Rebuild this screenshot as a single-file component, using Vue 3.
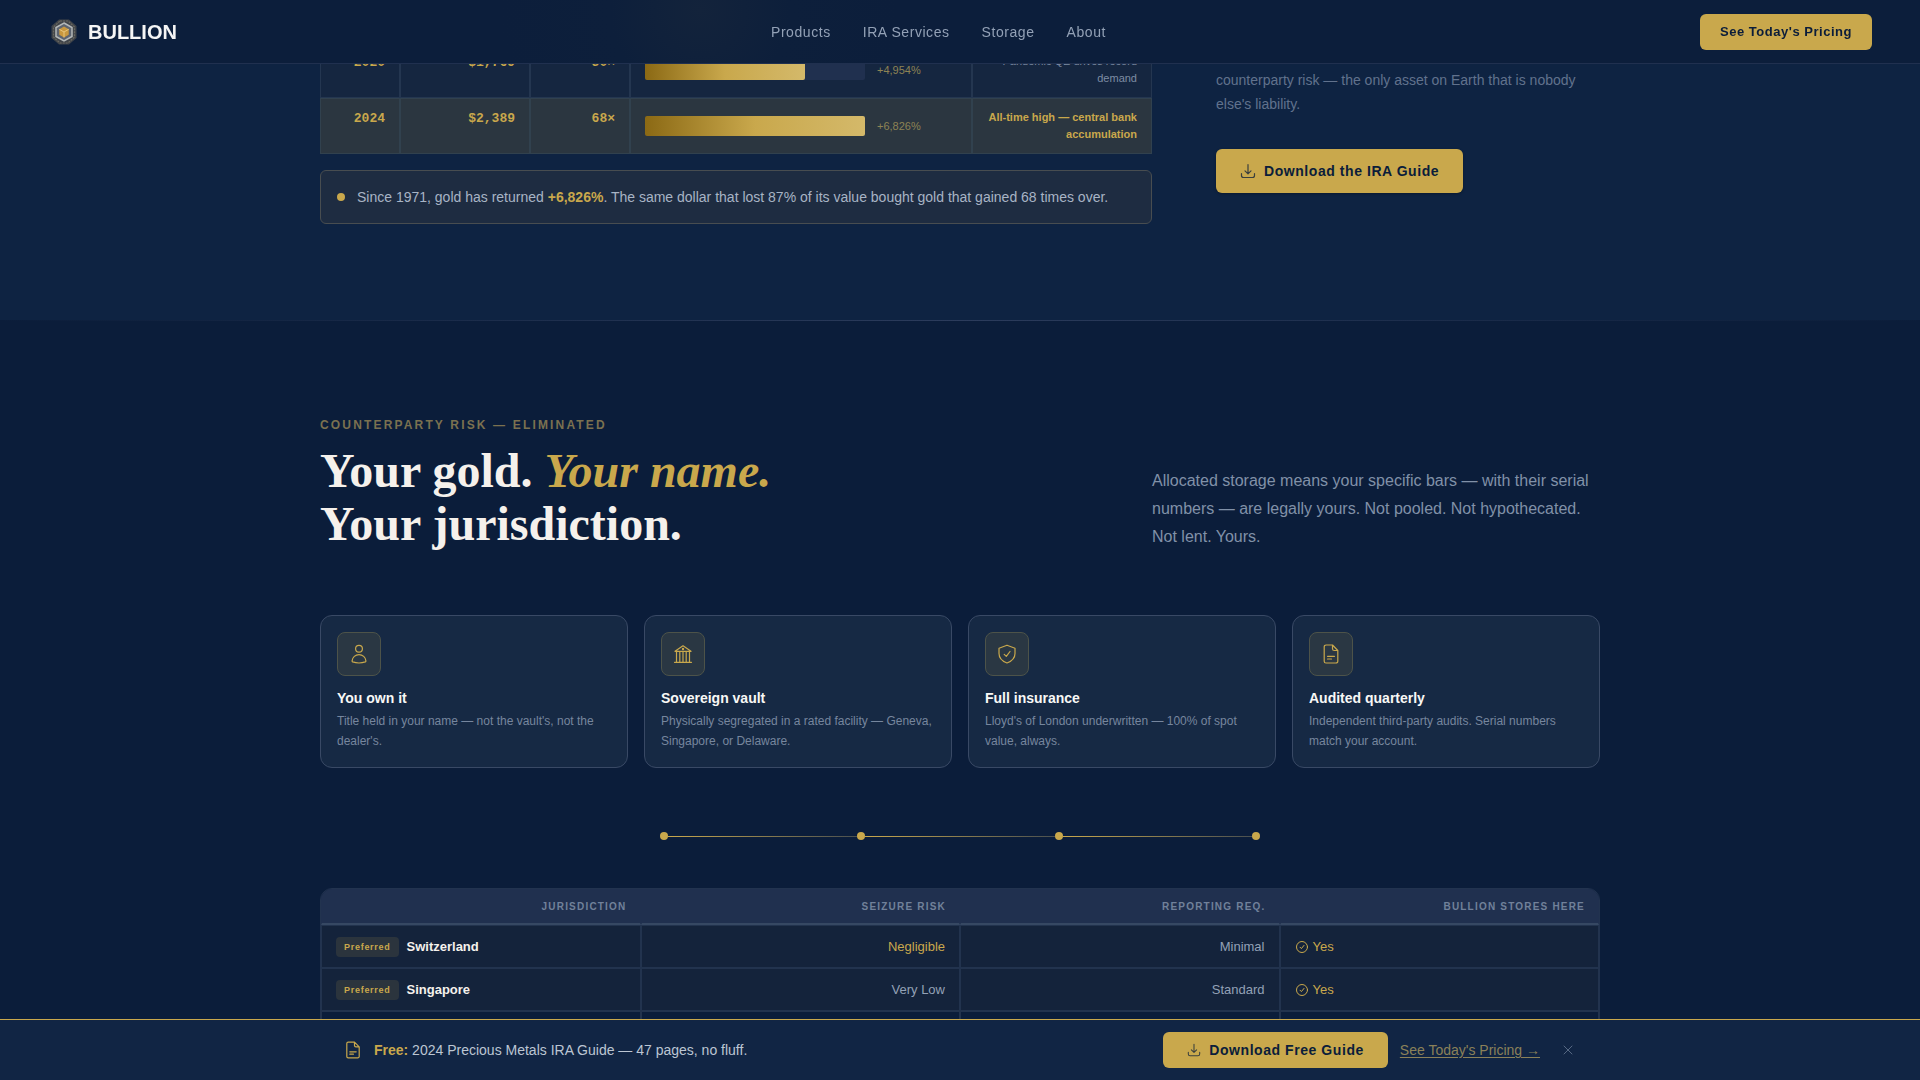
<script setup>
const links = ['Products', 'IRA Services', 'Storage', 'About']

const history = [
  { year: '2020', price: '$1,769', multiple: '50×', gain: 4954, label: '+4,954%', note: 'Pandemic QE drives record demand', peak: false },
  { year: '2024', price: '$2,389', multiple: '68×', gain: 6826, label: '+6,826%', note: 'All-time high — central bank accumulation', peak: true },
]
const maxGain = 6826

const pillars = [
  { icon: 'person', title: 'You own it', text: "Title held in your name — not the vault's, not the dealer's." },
  { icon: 'vault', title: 'Sovereign vault', text: 'Physically segregated in a rated facility — Geneva, Singapore, or Delaware.' },
  { icon: 'shield', title: 'Full insurance', text: "Lloyd's of London underwritten — 100% of spot value, always." },
  { icon: 'document', title: 'Audited quarterly', text: 'Independent third-party audits. Serial numbers match your account.' },
]

const jurisdictions = [
  { name: 'Switzerland', risk: 'Negligible', low: true, reporting: 'Minimal' },
  { name: 'Singapore', risk: 'Very Low', low: false, reporting: 'Standard' },
]
</script>

<template>
  <div class="page">
    <header class="topbar">
      <a class="brand" href="#">
        <svg width="32" height="32" viewBox="0 0 32 32" aria-hidden="true">
          <path d="M11 3.5h10l7.5 6.5v12L21 28.500H11L3.500 22V10z" fill="#40444a" />
          <path d="M12 5h8l6.500 6v10L20 27h-8l-6.500-6V11z" fill="none" stroke="#6a6960" stroke-width="1.200" stroke-dasharray="2 1" />
          <path d="M16 7l8 4.500v9L16 25l-8-4.500v-9z" fill="#5d6470" stroke="#b4b8b8" stroke-width="1.500" />
          <path d="M16 10.500l4.750 2.750v5.500L16 21.500l-4.750-2.750v-5.500z" fill="#c9983f" />
          <path d="M11.250 13.250L16 16l4.750-2.750M16 16v5.500" fill="none" stroke="#e8c67c" stroke-width="1" />
        </svg>
        <span>BULLION</span>
      </a>
      <nav class="nav" aria-label="Main">
        <a v-for="l in links" :key="l" href="#">{{ l }}</a>
      </nav>
      <button class="btn btn-small" type="button">See Today's Pricing</button>
    </header>

    <main>
      <section class="history">
        <div class="container history-grid">
          <div>
            <table class="gold-table">
              <colgroup>
                <col class="c-year" /><col class="c-price" /><col class="c-mult" /><col /><col class="c-note" />
              </colgroup>
              <tbody>
                <tr v-for="r in history" :key="r.year" :class="{ peak: r.peak }">
                  <td class="num">{{ r.year }}</td>
                  <td class="num">{{ r.price }}</td>
                  <td class="num">{{ r.multiple }}</td>
                  <td class="bar-cell">
                    <div class="bar-row">
                      <div class="track"><div class="fill" :style="{ width: (r.gain / maxGain) * 100 + '%' }"></div></div>
                      <span>{{ r.label }}</span>
                    </div>
                  </td>
                  <td class="note">{{ r.note }}</td>
                </tr>
              </tbody>
            </table>
            <div class="callout">
              <i class="dot"></i>
              <p>Since 1971, gold has returned <strong>+6,826%</strong>. The same dollar that lost 87% of its value bought gold that gained 68 times over.</p>
            </div>
          </div>
          <aside class="aside">
            <p>counterparty risk — the only asset on Earth that is nobody else's liability.</p>
            <button class="btn btn-large" type="button">
              <svg width="16" height="16" viewBox="0 0 16 16" class="line-icon" aria-hidden="true">
                <path d="M8 1.500v9M5 7.800l3 3 3-3M1.500 10.500v2a2 2 0 0 0 2 2h9a2 2 0 0 0 2-2v-2" />
              </svg>
              Download the IRA Guide
            </button>
          </aside>
        </div>
      </section>

      <section class="storage">
        <div class="rule"></div>
        <div class="container">
          <div class="intro">
            <div>
              <p class="eyebrow">COUNTERPARTY RISK — ELIMINATED</p>
              <h2>Your gold. <em>Your name.</em><br />Your jurisdiction.</h2>
            </div>
            <p class="lead">Allocated storage means your specific bars — with their serial numbers — are legally yours. Not pooled. Not hypothecated. Not lent. Yours.</p>
          </div>

          <div class="cards">
            <article v-for="p in pillars" :key="p.title" class="card">
              <div class="icon-box">
                <svg width="20" height="20" viewBox="0 0 20 20" class="line-icon" aria-hidden="true">
                  <template v-if="p.icon === 'person'">
                    <circle cx="10" cy="4.800" r="3.400" />
                    <path d="M10 10.600c-3.600 0-6.600 2.600-6.900 6.300 0 .5.200.8.600 1 3.700 1.300 8.900 1.300 12.600 0 .4-.2.600-.5.600-1-.3-3.700-3.300-6.300-6.900-6.300z" />
                  </template>
                  <template v-else-if="p.icon === 'vault'">
                    <path d="M2 7.300L10 1.800l8 5.500zM1.500 18.300h17M3.500 7.500v10.600M6.800 7.500v10.600M10 7.500v10.600M13.200 7.500v10.600M16.500 7.500v10.600" />
                    <circle cx="10" cy="5" r="0.600" />
                  </template>
                  <template v-else-if="p.icon === 'shield'">
                    <path d="M10 1.200l8 3v5.300c0 4.600-3.200 7.700-8 9.500-4.800-1.800-8-4.900-8-9.500V4.200z" />
                    <path d="M7.200 10.300l2.100 2.100 3.700-4.900" />
                  </template>
                  <template v-else>
                    <path d="M11.500 1H5a1.800 1.800 0 0 0-1.800 1.800v14.400A1.800 1.800 0 0 0 5 19h10a1.800 1.800 0 0 0 1.800-1.800V6.500zM11.500 1v3.700a1.800 1.800 0 0 0 1.800 1.800h3.500M6.500 12.300h7M6.500 15h4" />
                  </template>
                </svg>
              </div>
              <h3>{{ p.title }}</h3>
              <p>{{ p.text }}</p>
            </article>
          </div>

          <div class="chain" aria-hidden="true">
            <template v-for="n in 4" :key="n">
              <i class="dot"></i>
              <i v-if="n < 4" class="link"></i>
            </template>
          </div>

          <div class="table-wrap">
            <table class="places">
              <thead>
                <tr>
                  <th scope="col">JURISDICTION</th>
                  <th scope="col">SEIZURE RISK</th>
                  <th scope="col">REPORTING REQ.</th>
                  <th scope="col">BULLION STORES HERE</th>
                </tr>
              </thead>
              <tbody>
                <tr v-for="j in jurisdictions" :key="j.name" class="preferred">
                  <td class="left">
                    <div class="cell-row name"><span class="badge">Preferred</span><strong>{{ j.name }}</strong></div>
                  </td>
                  <td :class="{ gold: j.low }">{{ j.risk }}</td>
                  <td>{{ j.reporting }}</td>
                  <td class="left">
                    <div class="cell-row yes">
                      <svg width="14" height="14" viewBox="0 0 14 14" class="line-icon" aria-hidden="true">
                        <circle cx="7" cy="7" r="5.500" />
                        <path d="M5 7.200l1.400 1.400L9 5.400" />
                      </svg>
                      Yes
                    </div>
                  </td>
                </tr>
                <tr><td>&nbsp;</td><td></td><td></td><td></td></tr>
              </tbody>
            </table>
          </div>
        </div>
      </section>
    </main>

    <div class="offer">
      <div class="container offer-row">
        <div class="offer-text">
          <svg width="18" height="18" viewBox="0 0 18 18" class="line-icon" aria-hidden="true">
            <path d="M10.500 1.200H4.200a1.400 1.400 0 0 0-1.400 1.400v12.800a1.400 1.400 0 0 0 1.400 1.400h9.600a1.400 1.400 0 0 0 1.400-1.400V5.900zM10.500 1.200v3.300a1.400 1.400 0 0 0 1.400 1.400h3.300M5.800 10.800h6.400M5.800 13.200h3.600" />
          </svg>
          <p><strong>Free:</strong> 2024 Precious Metals IRA Guide — 47 pages, no fluff.</p>
        </div>
        <div class="offer-actions">
          <button class="btn btn-medium" type="button">
            <svg width="14" height="14" viewBox="0 0 16 16" class="line-icon" aria-hidden="true">
              <path d="M8 1.500v9M5 7.800l3 3 3-3M1.500 10.500v2a2 2 0 0 0 2 2h9a2 2 0 0 0 2-2v-2" />
            </svg>
            Download Free Guide
          </button>
          <a href="#">See Today's Pricing →</a>
          <button class="close" type="button" aria-label="Dismiss">
            <svg width="16" height="16" viewBox="0 0 16 16" class="line-icon" aria-hidden="true"><path d="M4 4l8 8M12 4l-8 8" /></svg>
          </button>
        </div>
      </div>
    </div>
  </div>
</template>

<style>
body {
  margin: 0;
  background: #0b1d3a;
}
</style>

<style scoped>
.page {
  min-height: 100vh;
  background: #0b1d3a;
  color: #f5f1ec;
  font-family: "Liberation Sans", Arial, sans-serif;
  font-size: 14px;
  line-height: 20px;
}
p, h2, h3 { margin: 0; }
.container {
  box-sizing: border-box;
  max-width: 1280px;
  margin: 0 auto;
}
.line-icon {
  flex: none;
  fill: none;
  stroke: currentColor;
  stroke-width: 1.2;
  stroke-linecap: round;
  stroke-linejoin: round;
}
.dot {
  flex: none;
  width: 8px;
  height: 8px;
  border-radius: 50%;
  background: #c9a84c;
}

/* Buttons */
.btn {
  display: inline-flex;
  align-items: center;
  gap: 8px;
  border: 0;
  border-radius: 6px;
  background: #c9a84c;
  color: #0b1d3a;
  font: bold 14px/20px "Liberation Sans", Arial, sans-serif;
  letter-spacing: 0.04em;
}
.btn .line-icon { opacity: 0.75; }
.btn-small { height: 36px; padding: 0 20px; font-size: 13px; }
.btn-medium { height: 36px; padding: 0 24px; }
.btn-large { height: 44px; padding: 0 24px; box-shadow: 0 1px 3px rgba(0, 0, 0, 0.3); }

/* Top bar */
.topbar {
  position: fixed;
  inset: 0 0 auto;
  z-index: 2;
  box-sizing: border-box;
  height: 64px;
  padding: 0 48px;
  display: flex;
  align-items: center;
  justify-content: space-between;
  border-bottom: 1px solid #20304f;
  background: radial-gradient(circle at 700px 10px, #13233b, #0d1f3b 90px, #0c1e3b 200px);
}
.brand {
  display: flex;
  align-items: center;
  gap: 8px;
  color: #f5f5f5;
  font-size: 20px;
  font-weight: bold;
  text-decoration: none;
}
.nav { display: flex; gap: 32px; }
.nav a {
  color: #93a1b6;
  letter-spacing: 0.04em;
  text-decoration: none;
}

/* Price history */
.history {
  padding: 42px 0 96px;
  background: #0e2342;
}
.history-grid {
  display: grid;
  grid-template-columns: 13fr 6fr;
  gap: 64px;
}
.gold-table {
  width: 100%;
  table-layout: fixed;
  border-collapse: separate;
  border-spacing: 0;
}
.c-year { width: 80px; }
.c-price { width: 130px; }
.c-mult { width: 100px; }
.c-note { width: 180px; }
.gold-table td {
  box-sizing: border-box;
  height: 56px;
  padding: 10px 14px;
  border: 1px solid #243650;
  background: #152640;
  vertical-align: top;
  text-align: right;
  line-height: 17px;
}
.gold-table .peak td { background: #2b3640; border-color: #31414e; }
.gold-table .num {
  padding-top: 11px;
  color: #c9a84c;
  font-family: "Liberation Mono", monospace;
  font-size: 13px;
  font-weight: bold;
}
.gold-table .bar-cell { vertical-align: middle; }
.bar-row {
  display: flex;
  align-items: center;
  gap: 12px;
  color: #8d8354;
  font-size: 11px;
}
.track { width: 220px; height: 20px; border-radius: 2px; background: #20304f; }
.fill {
  height: 100%;
  border-radius: 2px;
  background: linear-gradient(90deg, #8b6914, #c9a84c 50%, #d4b96a);
}
.gold-table .note { color: #7d8ca3; font-size: 11px; }
.gold-table .peak .note { color: #c9a84c; font-weight: bold; }

.callout {
  display: flex;
  align-items: center;
  gap: 12px;
  margin-top: 16px;
  padding: 16px;
  border: 1px solid #484d50;
  border-radius: 6px;
  background: #1e2c41;
  color: #a8b4c5;
}
.callout strong { color: #c9a84c; }
.aside { padding-top: 26px; }
.aside p { color: #61728d; line-height: 24px; }
.aside .btn { margin-top: 33px; }

/* Storage */
.rule {
  height: 1px;
  background: linear-gradient(90deg, transparent, #2c3c5c, transparent);
}
.intro {
  display: flex;
  justify-content: space-between;
  align-items: flex-end;
  padding-top: 95px;
}
.eyebrow {
  margin-bottom: 10px;
  color: #7b7150;
  font-size: 12px;
  font-weight: bold;
  line-height: 18px;
  letter-spacing: 0.18em;
}
h2 {
  padding-bottom: 1px;
  font-family: "Liberation Serif", "Times New Roman", serif;
  font-size: 48px;
  line-height: 53px;
}
h2 em { color: #c9a84c; }
.lead {
  width: 448px;
  color: #8191a8;
  font-size: 16px;
  line-height: 28px;
}
.cards {
  display: grid;
  grid-template-columns: repeat(4, 1fr);
  gap: 16px;
  margin-top: 64px;
}
.card {
  padding: 16px;
  border: 1px solid #394965;
  border-radius: 12px;
  background: #162944;
}
.icon-box {
  box-sizing: border-box;
  width: 44px;
  height: 44px;
  display: grid;
  place-items: center;
  border: 1px solid #4d5349;
  border-radius: 8px;
  background: #2a3743;
  color: #c9a84c;
}
.card h3 {
  margin: 12px 0 3px;
  color: #f8f8f6;
  font-size: 14px;
  line-height: 20px;
}
.card p { color: #76869e; font-size: 12px; line-height: 20px; }

.chain {
  display: flex;
  align-items: center;
  max-width: 600px;
  margin: 64px auto 48px;
}
.link {
  flex: 1;
  height: 1px;
  background: linear-gradient(90deg, #c9a84c, #4a5050);
}

.table-wrap {
  overflow: hidden;
  border: 1px solid #22334f;
  border-radius: 12px;
}
.places {
  width: 100%;
  table-layout: fixed;
  border-collapse: separate;
  border-spacing: 0;
}
.places th {
  padding: 8px 13px 7px;
  border: 1px solid #20304f;
  border-bottom: 2px solid #364863;
  background: #20304f;
  color: #71819a;
  font-size: 10px;
  line-height: 18px;
  letter-spacing: 0.12em;
  text-align: right;
}
.places td {
  padding: 10px 14px;
  border: 1px solid #22334e;
  color: #93a1b6;
  font-size: 13px;
  line-height: 21px;
  text-align: right;
}
.preferred td { background: #14233b; }
.places .left { text-align: left; }
.places .gold, .places .yes { color: #c9a84c; }
.cell-row { display: flex; align-items: center; }
.name { gap: 8px; color: #f5f1ec; }
.yes { gap: 4px; }
.yes .line-icon { stroke-width: 1; }
.badge {
  padding: 0 8px;
  border-radius: 4px;
  background: #2b343d;
  color: #c9a84c;
  font-size: 9px;
  font-weight: bold;
  line-height: 20px;
  letter-spacing: 0.08em;
}

/* Offer bar */
.offer {
  position: fixed;
  inset: auto 0 0;
  z-index: 2;
  border-top: 1px solid #c9a84c;
  background: #112544;
}
.offer-row {
  display: flex;
  align-items: center;
  justify-content: space-between;
  padding: 12px 24px;
}
.offer-text, .offer-actions { display: flex; align-items: center; gap: 12px; }
.offer-text { color: #bcc6d3; }
.offer-text svg, .offer-text strong { color: #c9a84c; }
.offer-actions a {
  color: #8b8159;
  text-decoration: underline;
  text-underline-offset: 2px;
}
.close {
  display: flex;
  margin-left: 8px;
  padding: 0;
  border: 0;
  background: none;
  color: #566883;
}
.close .line-icon { stroke-width: 1; }
</style>
